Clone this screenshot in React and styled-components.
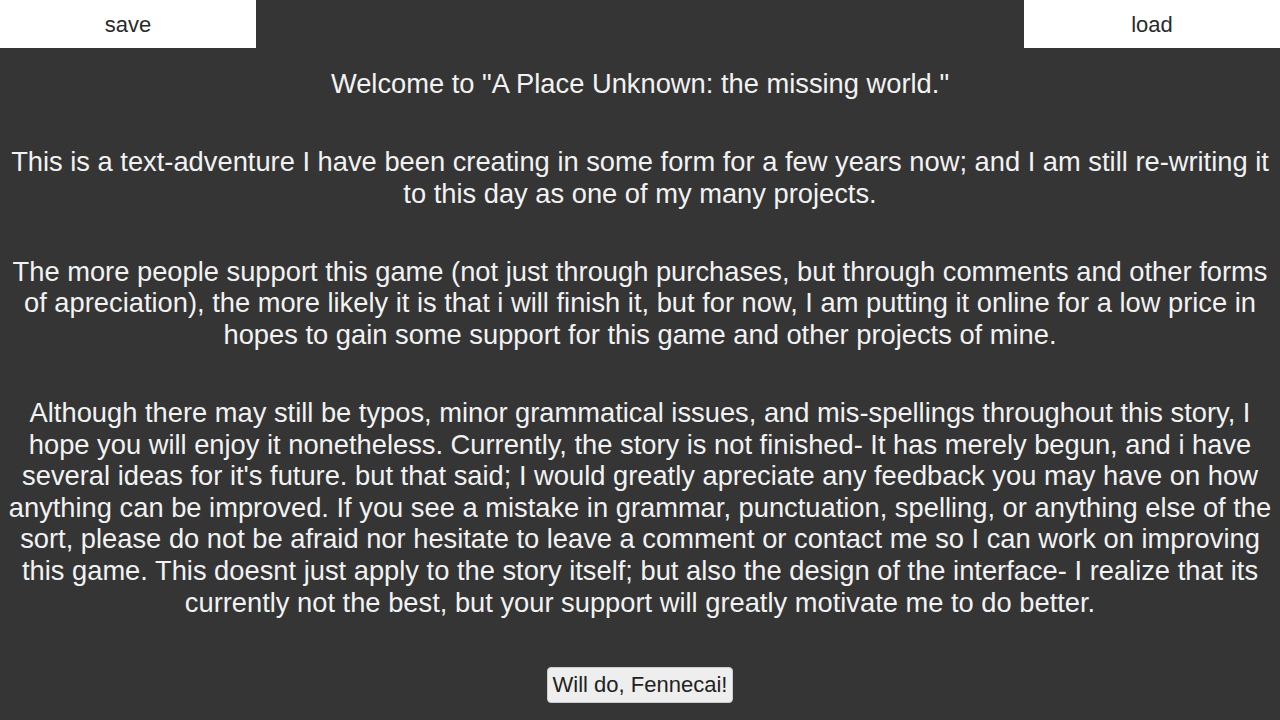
import React from "react";
import styled, { createGlobalStyle } from "styled-components";

const GlobalStyle = createGlobalStyle`
  html, body {
    margin: 0;
    padding: 0;
    background: #353535;
  }
  body {
    font-family: "Liberation Sans", Arial, sans-serif;
  }
`;

const TopBar = styled.div`
  display: flex;
  justify-content: space-between;
`;

const BarButton = styled.button`
  width: 256px;
  height: 48px;
  background: #ffffff;
  color: #2a2a2a;
  border: none;
  font-family: inherit;
  font-size: 22px;
  padding: 2px 0 0;
  cursor: pointer;
`;

const Story = styled.div`
  padding: 0 8px;
  text-align: center;
  color: #f2f2f2;
  font-size: 27.3px;
  line-height: 31.6px;
`;

const Para = styled.p`
  margin: ${(p) => (p.$first ? "20px" : "46.5px")} 0 0;
`;

const Choices = styled.div`
  display: flex;
  justify-content: center;
  padding-top: 49px;
`;

const Choice = styled.button`
  background: #eeeeee;
  color: #222;
  border: 1px solid #ccc;
  border-radius: 4px;
  font-family: inherit;
  font-size: 22px;
  height: 36px;
  padding: 0 5px;
  white-space: nowrap;
  cursor: pointer;
`;

export default function App() {
  return (
    <>
      <GlobalStyle />
      <TopBar>
        <BarButton>save</BarButton>
        <BarButton>load</BarButton>
      </TopBar>
      <Story>
        <Para $first>Welcome to "A Place Unknown: the missing world."</Para>
        <Para>
          This is a text-adventure I have been creating in some form for a few
          years now; and I am still re-writing it to this day as one of my many
          projects.
        </Para>
        <Para>
          The more people support this game (not just through purchases, but
          through comments and other forms of apreciation), the more likely it
          is that i will finish it, but for now, I am putting it online for a
          low price in hopes to gain some support for this game and other
          projects of mine.
        </Para>
        <Para>
          Although there may still be typos, minor grammatical issues, and
          mis-spellings throughout this story, I hope you will enjoy it
          nonetheless. Currently, the story is not finished- It has merely
          begun, and i have several ideas for it's future. but that said; I
          would greatly apreciate any feedback you may have on how anything can
          be improved. If you see a mistake in grammar, punctuation, spelling,
          or anything else of the sort, please do not be afraid nor hesitate to
          leave a comment or contact me so I can work on improving this game.
          This doesnt just apply to the story itself; but also the design of
          the interface- I realize that its currently not the best, but your
          support will greatly motivate me to do better.
        </Para>
      </Story>
      <Choices>
        <Choice>Will do, Fennecai!</Choice>
      </Choices>
    </>
  );
}
